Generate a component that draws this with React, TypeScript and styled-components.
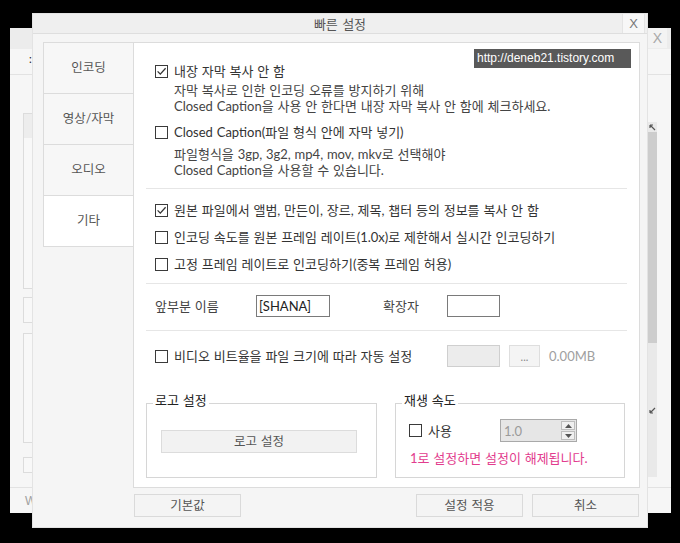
import React from 'react';
import styled, { createGlobalStyle } from 'styled-components';

const GlobalStyle = createGlobalStyle`
  html, body { margin: 0; padding: 0; background: #000; }
  body { font-family: "Lato", "Noto Sans CJK KR", sans-serif; font-size: 13px; }
  #root { width: 680px; height: 543px; }
  * { box-sizing: border-box; }
`;

const Desktop = styled.div`
  position: relative;
  width: 680px;
  height: 543px;
  background: #000;
  overflow: hidden;
`;

/* ---------- background window ---------- */
const BackWindow = styled.div`
  position: absolute;
  left: 10px;
  top: 28px;
  width: 661px;
  height: 485px;
  background: #f6f6f6;
  display: flex;
  flex-direction: column;
`;
const BackTitle = styled.div`
  height: 21px;
  background: #ececec;
  display: flex;
  justify-content: flex-end;
`;
const BackClose = styled.div`
  width: 19px;
  height: 20px;
  margin-right: 4px;
  background: #f3f3f3;
  color: #a8a8a8;
  font-family: "Liberation Sans", sans-serif;
  font-size: 14px;
  display: flex;
  align-items: center;
  justify-content: center;
`;
const BackToolbar = styled.div`
  height: 26px;
  border-bottom: 1px solid #e2e2e2;
  padding-left: 19px;
  color: #222;
  font-size: 11px;
  line-height: 20px;
`;
const BackBody = styled.div`
  flex: 1;
  display: flex;
  justify-content: space-between;
`;
const BackColumn = styled.div`
  width: 220px;
  padding: 38px 0 0 13px;
  display: flex;
  flex-direction: column;
`;
const BackBox = styled.div<{ $h: number; $mt: number; $head?: boolean }>`
  height: ${(p) => p.$h}px;
  margin-top: ${(p) => p.$mt}px;
  border: 1px solid #dcdcdc;
  background: #f8f8f8;
  ${(p) => (p.$head ? 'background: linear-gradient(#ededed 0 24px, #f8f8f8 24px);' : '')}
`;
const BackScroll = styled.div`
  width: 9px;
  margin: 47px 14px 10px 0;
  background: #e9e9e9;
  display: flex;
  flex-direction: column;
  align-items: center;
`;
const ScrollArrow = styled.div`
  height: 10px;
  width: 9px;
  display: flex;
  align-items: center;
  justify-content: center;
`;
const ScrollThumb = styled.div`
  width: 9px;
  height: 211px;
  background: #cdcdcd;
`;
const ScrollSpacer = styled.div`
  flex: 1;
`;
const BackFooter = styled.div`
  height: 26px;
  border-top: 1px solid #e2e2e2;
  padding-left: 15px;
  color: #a0a0a0;
  font-family: "Liberation Sans", sans-serif;
  font-size: 12px;
  line-height: 26px;
`;

/* ---------- foreground dialog ---------- */
const Dialog = styled.div`
  position: absolute;
  left: 32px;
  top: 13px;
  width: 616px;
  height: 515px;
  background: #f5f5f5;
  border: 1px solid #e3e3e3;
  display: flex;
  flex-direction: column;
`;
const TitleBar = styled.div`
  position: relative;
  height: 20px;
  background: #efefef;
  border-bottom: 1px solid #dedede;
  display: flex;
  align-items: center;
  justify-content: center;
  color: #555;
  font-size: 13px;
  line-height: 16px;
  word-spacing: 1px;
`;
const CloseButton = styled.div`
  position: absolute;
  right: 2px;
  top: 0;
  width: 23px;
  height: 19px;
  background: #f7f7f7;
  border-left: 1px solid #e4e4e4;
  border-right: 1px solid #e4e4e4;
  color: #777;
  font-family: "Liberation Sans", sans-serif;
  font-size: 13px;
  display: flex;
  align-items: center;
  justify-content: center;
`;
const DialogBody = styled.div`
  padding: 8px 7px 0 10px;
  display: flex;
  flex-direction: column;
`;
const MainRow = styled.div`
  display: flex;
  height: 446px;
`;
const TabList = styled.div`
  width: 90px;
  display: flex;
  flex-direction: column;
  border-top: 1px solid #dcdcdc;
`;
const Tab = styled.div<{ $active?: boolean }>`
  height: 51px;
  border-left: 1px solid #dcdcdc;
  border-bottom: 1px solid #dcdcdc;
  background: ${(p) => (p.$active ? '#fff' : '#f7f7f7')};
  color: #555;
  font-size: 12.5px;
  line-height: 16px;
  display: flex;
  align-items: center;
  justify-content: center;
`;
const Panel = styled.div`
  position: relative;
  width: 507px;
  height: 446px;
  background: #fff;
  border: 1px solid #dcdcdc;
  display: flex;
  flex-direction: column;
`;
const Watermark = styled.div`
  position: absolute;
  left: 340px;
  top: 6px;
  width: 157px;
  height: 19px;
  background: #595959;
  color: #fff;
  font-family: "Liberation Sans", sans-serif;
  font-size: 12px;
  line-height: 19px;
  padding-left: 3px;
`;
const Section = styled.div<{ $pt: number; $pb: number }>`
  padding: ${(p) => p.$pt}px 0 ${(p) => p.$pb}px 21px;
  display: flex;
  flex-direction: column;
`;
const Divider = styled.div`
  height: 1px;
  margin: 0 12px;
  background: #e6e6e6;
`;
const CheckRow = styled.div<{ $mt?: number; $w?: number }>`
  display: flex;
  align-items: center;
  gap: 6px;
  height: 16px;
  margin-top: ${(p) => p.$mt ?? 0}px;
  ${(p) => (p.$w ? `width: ${p.$w}px; flex: none;` : '')}
  color: #333;
  font-size: 13px;
  line-height: 16px;
  word-spacing: 0.5px;
  white-space: nowrap;
`;
const CheckBoxBox = styled.span`
  width: 13px;
  height: 13px;
  flex: none;
  border: 1px solid #3a3a3a;
  background: #fff;
  display: flex;
  align-items: center;
  justify-content: center;
`;
const Desc = styled.div<{ $mt: number }>`
  margin-top: ${(p) => p.$mt}px;
  padding-left: 19px;
  display: flex;
  flex-direction: column;
`;
const DescLine = styled.div`
  height: 16px;
  color: #444;
  font-size: 13px;
  line-height: 16px;
  word-spacing: 0.5px;
  white-space: nowrap;
`;
const FieldRow = styled.div`
  display: flex;
  align-items: center;
  height: 22px;
`;
const FieldLabel = styled.div<{ $w: number; $ml?: number }>`
  width: ${(p) => p.$w}px;
  margin-left: ${(p) => p.$ml ?? 0}px;
  flex: none;
  color: #444;
  font-size: 13px;
  line-height: 16px;
  word-spacing: 0.5px;
`;
const TextInput = styled.div<{ $w: number; $disabled?: boolean }>`
  width: ${(p) => p.$w}px;
  height: 22px;
  flex: none;
  border: 1px solid ${(p) => (p.$disabled ? '#cfcfcf' : '#7a7a7a')};
  background: ${(p) => (p.$disabled ? '#ececec' : '#fff')};
  color: #222;
  font-size: 13px;
  line-height: 20px;
  padding-left: 2px;
`;
const SmallButton = styled.div`
  width: 31px;
  height: 22px;
  margin-left: 9px;
  flex: none;
  border: 1px solid #dedede;
  background: #f4f4f4;
  color: #888;
  font-size: 11px;
  display: flex;
  align-items: center;
  justify-content: center;
`;
const SizeText = styled.div`
  margin-left: 9px;
  color: #a0a0a0;
  font-size: 13px;
`;
const GroupRow = styled.div`
  display: flex;
  gap: 18px;
  margin-top: 25px;
  padding-left: 12px;
`;
const GroupBox = styled.fieldset<{ $w: number }>`
  width: ${(p) => p.$w}px;
  height: 86px;
  margin: 0;
  padding: 0;
  border: 1px solid #d6d6d6;
  min-width: 0;
  display: flex;
  flex-direction: column;
`;
const Legend = styled.legend`
  margin-left: 6px;
  padding: 0 2px 6px 2px;
  color: #222;
  font-size: 13px;
  line-height: 16px;
  word-spacing: 0.5px;
`;
const WideButton = styled.div`
  width: 196px;
  height: 23px;
  margin: 16px 0 0 14px;
  border: 1px solid #dcdcdc;
  background: #f2f2f2;
  color: #555;
  font-size: 12.5px;
  line-height: 16px;
  word-spacing: 1px;
  display: flex;
  align-items: center;
  justify-content: center;
`;
const SpeedRow = styled.div`
  display: flex;
  align-items: center;
  margin: 5px 0 0 13px;
  height: 23px;
`;
const Spinner = styled.div`
  width: 77px;
  height: 23px;
  border: 1px solid #a9a9a9;
  background: #e6e6e6;
  display: flex;
  align-items: center;
  justify-content: space-between;
  padding: 0 1px 0 3px;
  color: #9a9a9a;
  font-size: 13px;
`;
const SpinButtons = styled.div`
  display: flex;
  flex-direction: column;
  gap: 1px;
`;
const SpinButton = styled.div`
  width: 14px;
  height: 9px;
  border: 1px solid #bdbdbd;
  background: #f0f0f0;
  display: flex;
  align-items: center;
  justify-content: center;
`;
const Notice = styled.div`
  margin: 8px 0 0 14px;
  color: #e23c8e;
  font-size: 13px;
  line-height: 16px;
  word-spacing: 0.5px;
`;
const ButtonRow = styled.div`
  display: flex;
  justify-content: space-between;
  margin: 6px 0 0 91px;
  padding-right: 1px;
`;
const ButtonGroup = styled.div`
  display: flex;
  gap: 9px;
`;
const DialogButton = styled.div`
  width: 107px;
  height: 23px;
  border: 1px solid #dadada;
  background: #f4f4f4;
  color: #555;
  font-size: 12.5px;
  line-height: 16px;
  word-spacing: 1px;
  display: flex;
  align-items: center;
  justify-content: center;
`;

const Check = ({ checked }: { checked?: boolean }) => (
  <CheckBoxBox>
    {checked && (
      <svg width="11" height="11" viewBox="0 0 11 11">
        <path d="M1.6 5.4 L4.3 8.1 L9.6 2.3" fill="none" stroke="#333" strokeWidth="1.3" />
      </svg>
    )}
  </CheckBoxBox>
);

const Tri = ({ up }: { up?: boolean }) => (
  <svg width="7" height="4" viewBox="0 0 7 4">
    <path d={up ? 'M0 4 L3.5 0 L7 4 Z' : 'M0 0 L3.5 4 L7 0 Z'} fill="#555" />
  </svg>
);

export default function App() {
  return (
    <>
      <GlobalStyle />
      <Desktop>
        <BackWindow>
          <BackTitle>
            <BackClose>X</BackClose>
          </BackTitle>
          <BackToolbar>:</BackToolbar>
          <BackBody>
            <BackColumn>
              <BackBox $h={176} $mt={0} $head />
              <BackBox $h={26} $mt={8} />
              <BackBox $h={110} $mt={10} />
              <BackBox $h={16} $mt={14} />
            </BackColumn>
            <BackScroll>
              <ScrollArrow>
                <svg width="7" height="7" viewBox="0 0 7 7">
                  <path d="M1 1 L6 6 M1 1 L4 1 M1 1 L1 4" stroke="#555" strokeWidth="1.2" fill="none" />
                </svg>
              </ScrollArrow>
              <ScrollThumb />
              <ScrollSpacer />
              <ScrollArrow>
                <svg width="7" height="7" viewBox="0 0 7 7">
                  <path d="M6 1 L1 6 M1 6 L4 6 M1 6 L1 3" stroke="#555" strokeWidth="1.2" fill="none" />
                </svg>
              </ScrollArrow>
              <ScrollSpacer />
            </BackScroll>
          </BackBody>
          <BackFooter>W</BackFooter>
        </BackWindow>

        <Dialog>
          <TitleBar>
            빠른 설정
            <CloseButton>X</CloseButton>
          </TitleBar>
          <DialogBody>
            <MainRow>
              <TabList>
                <Tab>인코딩</Tab>
                <Tab>영상/자막</Tab>
                <Tab>오디오</Tab>
                <Tab $active>기타</Tab>
              </TabList>
              <Panel>
                <Watermark>http://deneb21.tistory.com</Watermark>
                <Section $pt={20} $pb={10}>
                  <CheckRow>
                    <Check checked />
                    내장 자막 복사 안 함
                  </CheckRow>
                  <Desc $mt={3}>
                    <DescLine>자막 복사로 인한 인코딩 오류를 방지하기 위해</DescLine>
                    <DescLine>Closed Caption을 사용 안 한다면 내장 자막 복사 안 함에 체크하세요.</DescLine>
                  </Desc>
                  <CheckRow $mt={10}>
                    <Check />
                    Closed Caption(파일 형식 안에 자막 넣기)
                  </CheckRow>
                  <Desc $mt={6}>
                    <DescLine>파일형식을 3gp, 3g2, mp4, mov, mkv로 선택해야</DescLine>
                    <DescLine>Closed Caption을 사용할 수 있습니다.</DescLine>
                  </Desc>
                </Section>
                <Divider />
                <Section $pt={13} $pb={11}>
                  <CheckRow>
                    <Check checked />
                    원본 파일에서 앨범, 만든이, 장르, 제목, 챕터 등의 정보를 복사 안 함
                  </CheckRow>
                  <CheckRow $mt={11}>
                    <Check />
                    인코딩 속도를 원본 프레임 레이트(1.0x)로 제한해서 실시간 인코딩하기
                  </CheckRow>
                  <CheckRow $mt={11}>
                    <Check />
                    고정 프레임 레이트로 인코딩하기(중복 프레임 허용)
                  </CheckRow>
                </Section>
                <Divider />
                <Section $pt={11} $pb={13}>
                  <FieldRow>
                    <FieldLabel $w={101}>앞부분 이름</FieldLabel>
                    <TextInput $w={74}>[SHANA]</TextInput>
                    <FieldLabel $w={64} $ml={53}>확장자</FieldLabel>
                    <TextInput $w={53} />
                  </FieldRow>
                </Section>
                <Divider />
                <Section $pt={14} $pb={0}>
                  <FieldRow>
                    <CheckRow $w={292}>
                      <Check />
                      비디오 비트율을 파일 크기에 따라 자동 설정
                    </CheckRow>
                    <TextInput $w={53} $disabled />
                    <SmallButton>...</SmallButton>
                    <SizeText>0.00MB</SizeText>
                  </FieldRow>
                </Section>
                <GroupRow>
                  <GroupBox $w={231}>
                    <Legend>로고 설정</Legend>
                    <WideButton>로고 설정</WideButton>
                  </GroupBox>
                  <GroupBox $w={230}>
                    <Legend>재생 속도</Legend>
                    <SpeedRow>
                      <CheckRow $w={91}>
                        <Check />
                        사용
                      </CheckRow>
                      <Spinner>
                        1.0
                        <SpinButtons>
                          <SpinButton>
                            <Tri up />
                          </SpinButton>
                          <SpinButton>
                            <Tri />
                          </SpinButton>
                        </SpinButtons>
                      </Spinner>
                    </SpeedRow>
                    <Notice>1로 설정하면 설정이 해제됩니다.</Notice>
                  </GroupBox>
                </GroupRow>
              </Panel>
            </MainRow>
            <ButtonRow>
              <DialogButton>기본값</DialogButton>
              <ButtonGroup>
                <DialogButton>설정 적용</DialogButton>
                <DialogButton>취소</DialogButton>
              </ButtonGroup>
            </ButtonRow>
          </DialogBody>
        </Dialog>
      </Desktop>
    </>
  );
}
